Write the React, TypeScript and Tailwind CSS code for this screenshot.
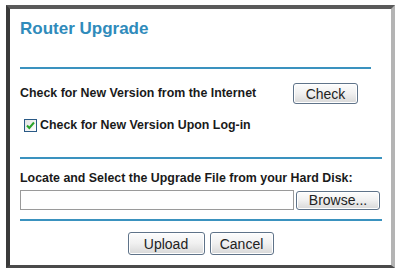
import React from "react";

const btn =
  "flex items-center justify-center rounded-[3px] border border-[#5f7389] bg-gradient-to-b from-[#fdfdfd] via-[#f0f0f0] to-[#d8d8d8] text-[14px] text-[#222] leading-none shadow-[inset_0_0_0_1px_#ffffff]";

export default function App() {
  return (
    <div className="w-[401px] h-[273px] bg-white pt-[5px] pl-[6px]" style={{ fontFamily: '"Liberation Sans", Arial, sans-serif' }}>
      <div className="w-[389px] h-[263px] border-t-[4px] border-l-[4px] border-r-[4px] border-b-[3px] border-t-[#5a5a5a] border-l-[#3a3a3a] border-r-[#b4b4b4] border-b-[#4a4a4a] bg-white pl-[10px] pr-[9px] flex flex-col">
        <div className="mt-[10px] h-[20px] leading-[20px] text-[17px] font-bold text-[#2f8bbb]">Router Upgrade</div>
        <div className="mt-[28px] mr-[11px] h-[2px] bg-[#3a92bf]" />
        <div className="mt-[14px] h-[21px] flex items-center">
          <span className="text-[12.4px] font-bold text-[#1a1a1a] w-[273px]">Check for New Version from the Internet</span>
          <div className={btn + " w-[65px] h-[21px]"}>Check</div>
        </div>
        <div className="mt-[14px] h-[14px] flex items-center pl-[4px]">
          <div className="w-[13px] h-[13px] border border-[#2a5a86] bg-gradient-to-br from-[#e2e2e2] to-[#ffffff] flex items-center justify-center">
            <svg width="11" height="11" viewBox="0 0 11 11">
              <path d="M2 5.5 L4.3 8 L9 2.5" stroke="#2aa32a" strokeWidth="2" fill="none" />
            </svg>
          </div>
          <span className="ml-[3px] text-[12.4px] font-bold text-[#1a1a1a]">Check for New Version Upon Log-in</span>
        </div>
        <div className="mt-[25px] h-[2px] bg-[#3a92bf]" />
        <div className="mt-[12px] h-[14px] leading-[14px] text-[12.4px] font-bold text-[#1a1a1a]">Locate and Select the Upgrade File from your Hard Disk:</div>
        <div className="mt-[5px] h-[20px] flex items-center">
          <div className="w-[274px] h-[20px] border border-[#9a9a9a] bg-white" />
          <div className={btn + " ml-[2px] w-[84px] h-[19px]"}>Browse...</div>
        </div>
        <div className="mt-[9px] h-[2px] bg-[#3a92bf]" />
        <div className="mt-[11px] flex justify-center gap-[5px] pr-[1px]">
          <div className={btn + " w-[77px] h-[23px]"}>Upload</div>
          <div className={btn + " w-[64px] h-[23px]"}>Cancel</div>
        </div>
      </div>
    </div>
  );
}
